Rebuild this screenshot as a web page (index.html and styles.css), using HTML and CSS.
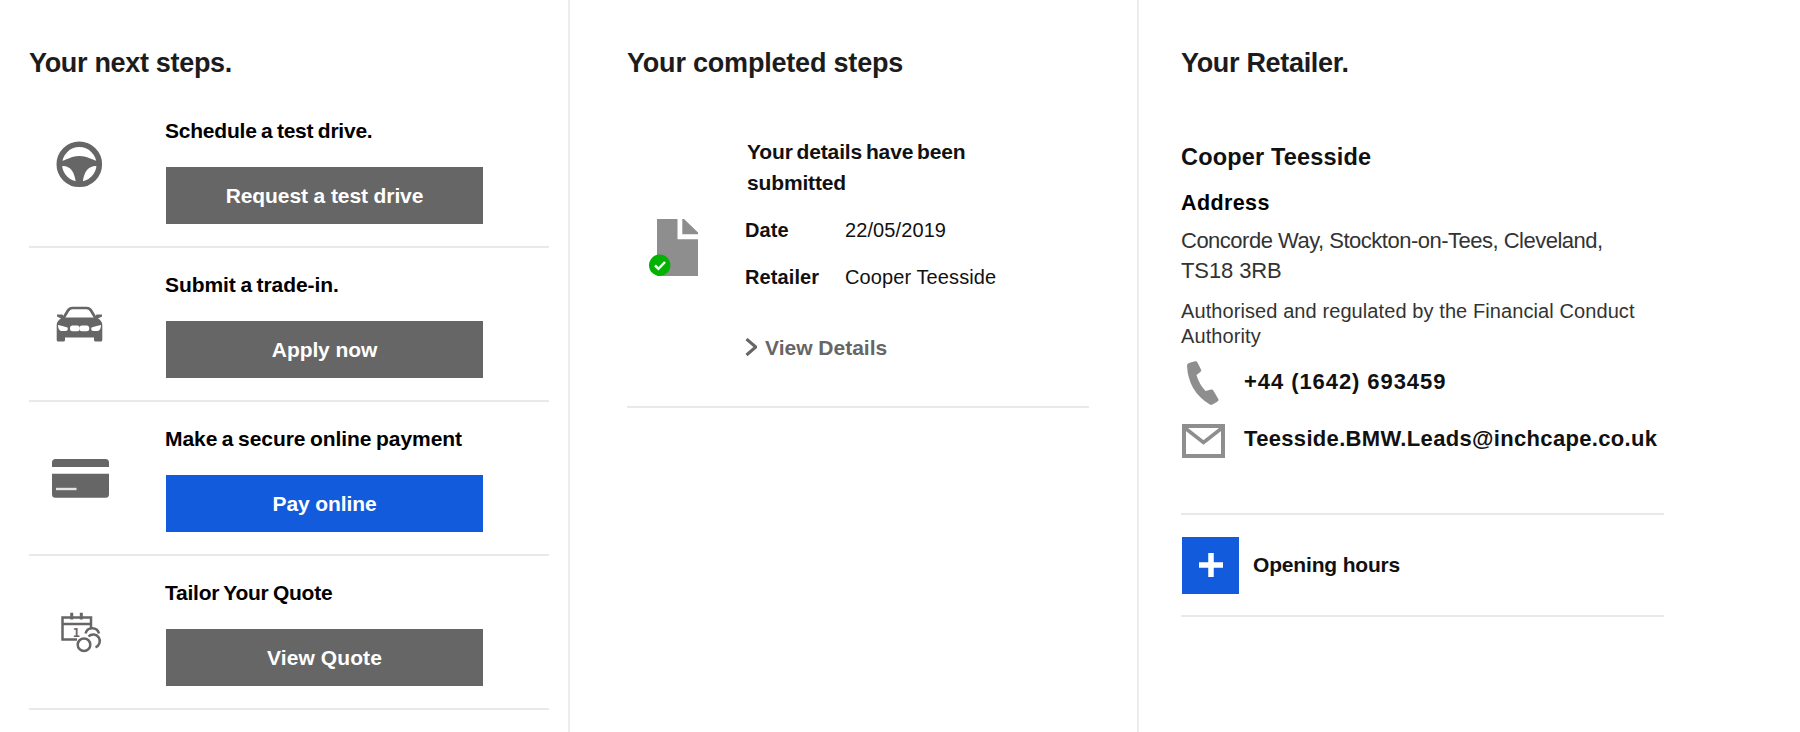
FILE: index.html
```html
<!DOCTYPE html>
<html lang="en">
<head>
    <meta charset="UTF-8">
    <meta name="viewport" content="width=device-width, initial-scale=1">
    <title>Your next steps</title>
    <link rel="stylesheet" href="styles.css">
</head>
<body>
    <div class="dashboard">
        <section class="column next-steps">
            <h2 class="heading">Your next steps.</h2>

            <div class="step">
                <svg class="step-icon" viewBox="0 0 60 60">
                    <circle cx="29.3" cy="24.3" r="20" fill="none" stroke="#666" stroke-width="5.6"/>
                    <path d="M9 21.5C17 20.5 20 16 29.3 16S42 20.5 50 21.5V26H46C38 26 33.5 32 32.6 44H26C25 32 20.5 26 13 26H9z" fill="#666"/>
                </svg>
                <div class="step-body">
                    <h3 class="step-title title-drive">Schedule a test drive.</h3>
                    <a class="btn" href="#">Request a test drive</a>
                </div>
            </div>

            <div class="step">
                <svg class="step-icon" viewBox="0 0 60 60">
                    <path d="M13.5 24L18 16.5Q19.5 14 22.5 14H36.5Q39.5 14 41 16.5L45.5 24" fill="none" stroke="#666" stroke-width="2.7"/>
                    <path d="M7 20.5H12.5L14 23.5H45L46.5 20.5H52V22.5L48 24.5Q52.3 27 52.3 31V46Q52.3 47.5 50.8 47.5H45.5Q44 47.5 44 46V43.5H15V46Q15 47.5 13.5 47.5H8.2Q6.7 47.5 6.7 46V31Q6.7 27 11 24.5L7 22.5z" fill="#666"/>
                    <path d="M8 31Q12 31.5 17.5 33.5Q18.5 36.5 16 37H11Q8 36 8 31zM51 31Q47 31.5 41.5 33.5Q40.5 36.5 43 37H48Q51 36 51 31z" fill="#fff"/>
                    <rect x="20" y="31.5" width="9.7" height="5.8" rx="2.5" fill="#fff"/>
                    <rect x="29.5" y="31.5" width="9.7" height="5.8" rx="2.5" fill="#fff"/>
                </svg>
                <div class="step-body">
                    <h3 class="step-title">Submit a trade-in.</h3>
                    <a class="btn" href="#">Apply now</a>
                </div>
            </div>

            <div class="step">
                <svg class="step-icon" viewBox="0 0 60 60">
                    <path d="M2 19V14.5Q2 11 5.5 11H55.5Q59 11 59 14.5V19zM2 25.7H59V46.2Q59 49.7 55.5 49.7H5.5Q2 49.7 2 46.2z" fill="#666"/>
                    <path d="M6 41H26.5" stroke="#e4e4e4" stroke-width="2.4"/>
                </svg>
                <div class="step-body">
                    <h3 class="step-title">Make a secure online payment</h3>
                    <a class="btn btn-primary" href="#">Pay online</a>
                </div>
            </div>

            <div class="step">
                <svg class="step-icon" viewBox="0 0 60 60">
                    <g fill="none" stroke="#666" stroke-width="2.5">
                        <path d="M41 26V15.5H12.5V37.5H27M12.5 22H41"/>
                        <path d="M21.7 10.7V17.5M31.3 10.7V17.5" stroke-width="3"/>
                        <circle cx="34" cy="42.7" r="6.3"/>
                        <path d="M35.5 31.5A7 7 0 0 1 49 31.5"/>
                        <path d="M38.5 34.5A6.6 6.6 0 1 1 45.5 45.3"/>
                    </g>
                    <text class="calendar-day" x="26.3" y="34.5">1</text>
                </svg>
                <div class="step-body">
                    <h3 class="step-title title-quote">Tailor Your Quote</h3>
                    <a class="btn btn-quote" href="#">View Quote</a>
                </div>
            </div>
        </section>

        <section class="column completed-steps">
            <h2 class="heading">Your completed steps</h2>

            <div class="completed">
                <svg class="completed-icon" viewBox="0 0 49 57">
                    <path d="M8 0H28.5V20.3H49V57H8zM33.3 0H35L49 13.5V15.3H33.3z" fill="#8e8e8e"/>
                    <circle cx="10.7" cy="46.3" r="10.7" fill="#00b300"/>
                    <path d="M6 46.5L9.5 49.8L16 43" fill="none" stroke="#fff" stroke-width="2.5"/>
                </svg>
                <div class="completed-body">
                    <h3 class="completed-title">Your details have been submitted</h3>
                    <dl class="details">
                        <dt>Date</dt>
                        <dd>22/05/2019</dd>
                        <dt>Retailer</dt>
                        <dd>Cooper Teesside</dd>
                    </dl>
                    <a class="view-details" href="#">
                        <svg viewBox="0 0 12 20" width="12" height="20"><path d="M1.5 1L10.8 9L1.5 17" fill="none" stroke="#666" stroke-width="3"/></svg>
                        <span>View Details</span>
                    </a>
                </div>
            </div>
        </section>

        <section class="column retailer">
            <h2 class="heading">Your Retailer.</h2>
            <h3 class="retailer-name">Cooper Teesside</h3>
            <h4 class="address-title">Address</h4>
            <p class="address">Concorde Way, Stockton-on-Tees, Cleveland,<br><span class="postcode">TS18 3RB</span></p>
            <p class="regulated">Authorised and regulated by the Financial Conduct<br>Authority</p>

            <div class="contact">
                <svg viewBox="0 0 44 44">
                    <path d="M7 2L13 0.3Q14.5 0 15.3 1.2L19 8.5Q19.6 10 18.3 11L14.5 14Q17 23 23.5 30L29 28.5Q30.5 28.2 31.3 29.5L36.3 38Q37 39.5 35.5 40.5L30.5 43.5Q29 44.2 27.5 43.3Q6 30 5 4.5Q5 2.6 7 2z" fill="#8e8e8e"/>
                </svg>
                <a class="phone" href="#">+44 (1642) 693459</a>
            </div>
            <div class="contact">
                <svg viewBox="0 0 44 44">
                    <path d="M2 8H41V38H2z" fill="none" stroke="#8e8e8e" stroke-width="4"/>
                    <path d="M3 10L21.5 24.5L40 10" fill="none" stroke="#8e8e8e" stroke-width="3.5"/>
                </svg>
                <a class="email" href="#">Teesside.BMW.Leads@inchcape.co.uk</a>
            </div>

            <div class="opening">
                <button class="opening-toggle" aria-label="Show opening hours">
                    <svg viewBox="0 0 24 24" width="24" height="24"><path d="M12 0V24M0 12H24" stroke="#fff" stroke-width="5.5"/></svg>
                </button>
                <span>Opening hours</span>
            </div>
        </section>
    </div>
</body>
</html>
```

FILE: styles.css
```css
* {
    box-sizing: border-box;
}
body {
    font-family: "Liberation Sans", Arial, sans-serif;
    background: #fff;
    color: #111;
    margin: 0;
}
h2, h3, h4, p, dl, dd {
    margin: 0;
}
a {
    color: inherit;
    text-decoration: none;
}
.dashboard {
    display: grid;
    grid-template-columns: 570px 569px 1fr;
    height: 732px;
    overflow: hidden;
}
.column {
    padding-top: 47px;
    border-right: 2px solid #ececec;
}
.heading {
    font-size: 27px;
    line-height: 32px;
    letter-spacing: -0.32px;
    color: #1c1c1c;
}

/* Next steps */
.next-steps {
    padding-left: 29px;
    padding-right: 19px;
}
.next-steps .heading {
    margin-bottom: 15px;
}
.step {
    display: flex;
    height: 154px;
    padding: 24px 0 0 21px;
    border-bottom: 2px solid #e9e9e9;
}
.step-icon {
    width: 60px;
    height: 60px;
    margin: 22px 55px 0 0;
    flex: none;
}
.calendar-day {
    font-family: "DejaVu Sans Mono", monospace;
    font-size: 12px;
    font-weight: 700;
    text-anchor: middle;
    fill: #666;
}
.step-title {
    font-size: 21px;
    line-height: 26px;
    letter-spacing: -0.06px;
    word-spacing: -1.2px;
    margin-bottom: 23px;
    color: #000;
}
.title-drive {
    letter-spacing: -0.22px;
}
.title-quote {
    letter-spacing: -0.24px;
}
.btn {
    display: flex;
    align-items: center;
    justify-content: center;
    width: 317px;
    height: 57px;
    margin-left: 1px;
    background: #666;
    color: #fff;
    font-size: 21px;
    font-weight: 700;
    letter-spacing: -0.1px;
}
.btn-primary {
    background: #125bdc;
}
.btn-quote {
    letter-spacing: 0.1px;
}

/* Completed steps */
.completed-steps {
    padding-left: 57px;
    padding-right: 48px;
}
.completed-steps .heading {
    letter-spacing: -0.2px;
}
.completed {
    display: flex;
    height: 329px;
    padding: 58px 0 0 22px;
    border-bottom: 2px solid #e9e9e9;
}
.completed-icon {
    width: 49px;
    height: 57px;
    margin: 82px 47px 0 0;
    flex: none;
}
.completed-title {
    width: 240px;
    padding-left: 2px;
    font-size: 21px;
    line-height: 30.5px;
    letter-spacing: -0.15px;
    word-spacing: -1.8px;
    margin-bottom: 19px;
}
.details {
    display: grid;
    grid-template-columns: 100px auto;
    row-gap: 20.5px;
    font-size: 20px;
    line-height: 26px;
    letter-spacing: 0.1px;
    margin-bottom: 45.5px;
}
.details dt {
    font-weight: 700;
}
.view-details {
    display: flex;
    align-items: center;
    gap: 8px;
    color: #666;
    font-size: 21px;
    font-weight: 700;
    line-height: 26px;
}

/* Retailer */
.retailer {
    padding-left: 42px;
    padding-right: 136px;
    border-right: none;
}
.retailer-name {
    font-size: 23.5px;
    line-height: 28px;
    letter-spacing: 0.18px;
    margin: 64px 0 19px;
}
.address-title {
    font-size: 21.5px;
    line-height: 26px;
    letter-spacing: 0.4px;
    color: #000;
    margin-bottom: 10px;
}
.address {
    font-size: 22px;
    line-height: 30px;
    letter-spacing: -0.5px;
    color: #333;
    margin-bottom: 13px;
    white-space: nowrap;
}
.postcode {
    letter-spacing: -0.1px;
}
.regulated {
    font-size: 20px;
    line-height: 24.5px;
    letter-spacing: 0.09px;
    color: #333;
    margin-bottom: 13px;
    white-space: nowrap;
}
.contact {
    display: flex;
    gap: 18px;
    height: 57px;
    padding-left: 1px;
    font-size: 22px;
    font-weight: 700;
    line-height: 26px;
}
.contact svg {
    width: 44px;
    height: 44px;
    flex: none;
}
.contact a {
    padding-top: 8px;
}
.phone {
    letter-spacing: 0.93px;
}
.email {
    letter-spacing: 0.33px;
}
.opening {
    display: flex;
    align-items: center;
    gap: 14px;
    height: 104px;
    margin-top: 38px;
    padding-left: 1px;
    border-top: 2px solid #e9e9e9;
    border-bottom: 2px solid #e9e9e9;
    font-size: 21px;
    font-weight: 700;
    letter-spacing: -0.17px;
}
.opening-toggle {
    display: flex;
    align-items: center;
    justify-content: center;
    width: 57px;
    height: 57px;
    padding: 0;
    border: none;
    background: #125bdc;
}
```
